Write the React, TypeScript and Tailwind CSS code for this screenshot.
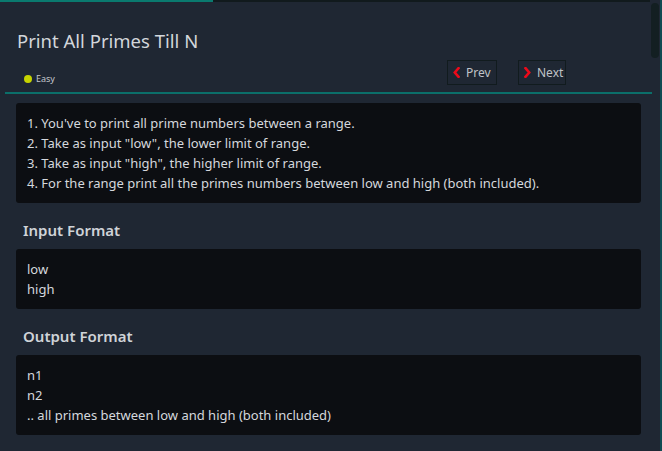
const sans = { fontFamily: '"Noto Sans", "Open Sans", sans-serif' };

const Chevron = ({ dir }: { dir: "left" | "right" }) => (
  <svg width="7" height="11" viewBox="0 0 7 11" className="shrink-0">
    <polyline
      points={dir === "left" ? "5.5,1.2 1.8,5.5 5.5,9.8" : "1.5,1.2 5.2,5.5 1.5,9.8"}
      fill="none"
      stroke="#ec0a1a"
      strokeWidth="2.6"
      strokeLinecap="square"
      strokeLinejoin="miter"
    />
  </svg>
);

const Block = ({ lines }: { lines: string[] }) => (
  <div className="rounded-[3px] bg-[#0c0e12] px-[11px] py-[10px] text-[13px] leading-[20px] text-[#d5d8dd]">
    {lines.map((line, i) => (
      <div key={i}>{line}</div>
    ))}
  </div>
);

const Heading = ({ children }: { children: string }) => (
  <h2 className="ml-[7px] mt-[15px] mb-[7px] text-[15px] font-semibold leading-[24px] text-[#cfd3d8]">
    {children}
  </h2>
);

export default function App() {
  return (
    <div className="flex h-[451px] w-[662px] overflow-hidden bg-[#1f2733]" style={sans}>
      <main className="flex w-[650px] flex-col">
        <div className="flex h-[2px] shrink-0">
          <div className="w-[213px] bg-[#0a7a6f]" />
          <div className="flex-1 bg-[#111a1d]" />
        </div>

        <header className="pl-[17px] pt-[25px]">
          <h1 className="text-[18.5px] leading-[28px] text-[#d2d6db]">Print All Primes Till N</h1>
          <div className="mt-[5px] flex items-end">
            <div className="ml-[7px] flex items-center gap-[4px] text-[9px] leading-[12px] text-[#c2c6cb]">
              <span className="h-[8px] w-[8px] rounded-full bg-[#c6d400]" />
              Easy
            </div>
            <div className="ml-auto mr-[84px] flex gap-[21px]">
              <button className="flex h-[25px] w-[50px] items-center gap-[6px] border border-[#111b1e] pl-[5px] text-[12px] text-[#bfc3c8]">
                <Chevron dir="left" />
                Prev
              </button>
              <button className="flex h-[25px] w-[48px] items-center gap-[6px] border border-[#111b1e] pl-[5px] text-[12px] text-[#bfc3c8]">
                <Chevron dir="right" />
                Next
              </button>
            </div>
          </div>
        </header>

        <div className="ml-[5px] mt-[7px] h-[2px] w-[647px] shrink-0 bg-[#0b6f6a]" />

        <section className="pl-4 pr-[9px] pt-[9px]">
          <Block
            lines={[
              "1. You've to print all prime numbers between a range.",
              '2. Take as input "low", the lower limit of range.',
              '3. Take as input "high", the higher limit of range.',
              "4. For the range print all the primes numbers between low and high (both included).",
            ]}
          />
          <Heading>Input Format</Heading>
          <Block lines={["low", "high"]} />
          <Heading>Output Format</Heading>
          <Block lines={["n1", "n2", ".. all primes between low and high (both included)"]} />
        </section>
      </main>

      <div className="w-[10px] pl-[1px] pt-[3px]">
        <div className="h-[55px] w-[8px] rounded-[4px] bg-[#131f22]" />
      </div>
      <div className="w-[2px] bg-[#0f4b52]" />
    </div>
  );
}
